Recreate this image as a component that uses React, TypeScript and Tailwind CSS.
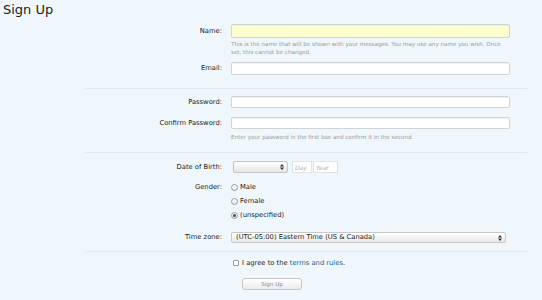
import React from "react"

const font = { fontFamily: '"DejaVu Sans", "Liberation Sans", sans-serif' }

function Arrows() {
  return (
    <svg width="4" height="6" viewBox="0 0 4 6" className="shrink-0">
      <path d="M0 2.4 L2 0 L4 2.4 Z" fill="#333" />
      <path d="M0 3.6 L2 6 L4 3.6 Z" fill="#333" />
    </svg>
  )
}

function Label({ children, className = "" }: { children: React.ReactNode; className?: string }) {
  return (
    <div className={`flex items-center justify-end text-right text-[6.75px] text-[#222] ${className}`}>{children}</div>
  )
}

function Radio({ label, checked }: { label: string; checked?: boolean }) {
  return (
    <div className="flex h-[14px] items-center gap-[2px]">
      <span className="flex h-[7px] w-[7px] items-center justify-center rounded-full border border-[#9a9a9a] bg-gradient-to-b from-white to-[#e8e8e8]">
        {checked && <span className="h-[3px] w-[3px] rounded-full bg-[#2a4e7a]" />}
      </span>
      <span className="text-[6.75px] text-[#222]">{label}</span>
    </div>
  )
}

const inputCls = "w-full rounded-[2px] border border-[#cfd4d8] shadow-[inset_0_1px_1px_rgba(0,0,0,0.06)]"

export default function App() {
  return (
    <div className="h-[300px] w-[542px] overflow-hidden bg-[#f0f7fc] px-[3px]" style={font}>
      <h1 className="h-[20px] text-[13px] leading-[20px] text-[#1a1a1a]">Sign Up</h1>

      <form className="ml-[82px] w-[442px]">
        {/* Name / Email */}
        <div className="mt-[4px] grid grid-cols-[137px_279px] gap-x-[9px]">
          <Label className="h-[14px]">Name:</Label>
          <div className={`${inputCls} h-[14px] bg-[#fdfdd0]`} />
          <div />
          <p className="mt-[2px] text-[5.6px] leading-[8px] text-[#9a9a9a]">
            This is the name that will be shown with your messages. You may use any name you wish. Once set, this
            cannot be changed.
          </p>
          <Label className="mt-[6px] h-[13px]">Email:</Label>
          <div className={`${inputCls} mt-[6px] h-[13px] bg-white`} />
        </div>

        <div className="mt-[13px] border-t border-[#e1eaf1]" />

        {/* Passwords */}
        <div className="mt-[7px] grid grid-cols-[137px_279px] gap-x-[9px]">
          <Label className="h-[12px]">Password:</Label>
          <div className={`${inputCls} h-[12px] bg-white`} />
          <Label className="mt-[9px] h-[12px]">Confirm Password:</Label>
          <div className={`${inputCls} mt-[9px] h-[12px] bg-white`} />
          <div />
          <p className="mt-[4px] text-[5.6px] leading-[8px] text-[#9a9a9a]">
            Enter your password in the first box and confirm it in the second.
          </p>
        </div>

        <div className="mt-[11px] border-t border-[#e1eaf1]" />

        {/* DOB / Gender / Time zone */}
        <div className="mt-[8px] grid grid-cols-[137px_279px] gap-x-[9px]">
          <Label className="h-[12px]">Date of Birth:</Label>
          <div className="flex h-[12px] items-stretch gap-[4px] pl-[2px]">
            <div className="flex w-[55px] items-center justify-end rounded-[2px] border border-[#c4c4c4] bg-gradient-to-b from-white to-[#e6e6e6] pr-[3px]">
              <Arrows />
            </div>
            <div className="flex w-[20px] items-center border border-[#dde2e6] bg-white pl-[2px] text-[6px] italic text-[#b0b0b0]">
              Day
            </div>
            <div className="-ml-[3px] flex w-[25px] items-center border border-[#dde2e6] bg-white pl-[2px] text-[6px] italic text-[#b0b0b0]">
              Year
            </div>
          </div>

          <Label className="mt-[7px] h-[14px]">Gender:</Label>
          <div className="mt-[7px] flex flex-col">
            <Radio label="Male" />
            <Radio label="Female" />
            <Radio label="(unspecified)" checked />
          </div>

          <Label className="mt-[10px] h-[11px]">Time zone:</Label>
          <div className="mt-[10px] flex h-[11px] w-[275px] items-center justify-between rounded-[2px] border border-[#c8c8c8] bg-gradient-to-b from-white to-[#e9e9e9] pl-[4px] pr-[3px] text-[6.75px] text-[#222]">
            <span>(UTC-05:00) Eastern Time (US &amp; Canada)</span>
            <Arrows />
          </div>
        </div>

        <div className="mt-[8px] border-t border-[#e1eaf1]" />

        {/* Agree / submit */}
        <div className="mt-[5px] grid grid-cols-[137px_279px] gap-x-[9px]">
          <div />
          <div className="flex h-[12px] items-center gap-[3px] pl-[2px] text-[6.75px] text-[#222]">
            <span className="h-[6px] w-[6px] rounded-[1px] border border-[#9a9a9a] bg-white" />
            <span>
              I agree to the <span className="text-[#176093]">terms and rules</span>.
            </span>
          </div>
          <div />
          <div className="mt-[9px] pl-[11px]">
            <button
              type="button"
              className="flex h-[12px] w-[60px] items-center justify-center rounded-[3px] border border-[#c6c6c6] bg-gradient-to-b from-white to-[#ececec] text-[5.6px] text-[#8a8a8a]"
            >
              Sign Up
            </button>
          </div>
        </div>
      </form>
    </div>
  )
}
